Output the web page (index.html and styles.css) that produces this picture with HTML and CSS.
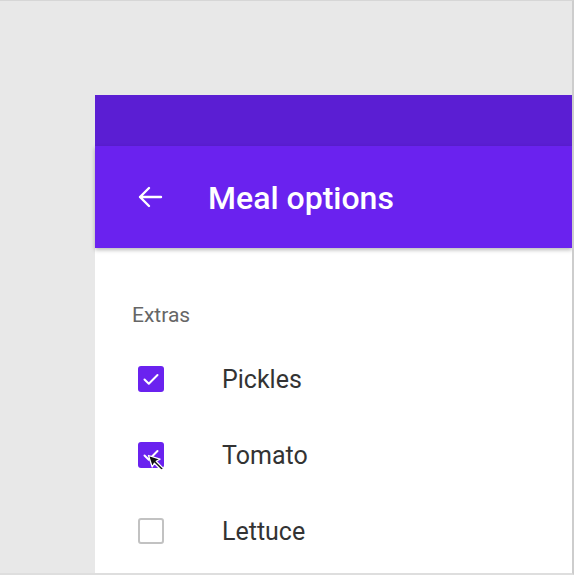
FILE: index.html
```html
<!DOCTYPE html>
<html>
<head>
<meta charset="utf-8">
<link rel="stylesheet" href="styles.css">
</head>
<body>
<div class="frame">
  <div class="card">
    <div class="status"></div>
    <div class="toolbar">
      <svg class="back" width="28" height="28" viewBox="0 0 28 28">
        <path d="M25 14H4M13 5L4 14L13 23" fill="none" stroke="#fff" stroke-width="2.4" stroke-linecap="round" stroke-linejoin="round"/>
      </svg>
      <h1 class="title">Meal options</h1>
    </div>
    <div class="content">
      <div class="section">Extras</div>
      <div class="row">
        <span class="box checked">
          <svg width="26" height="26" viewBox="0 0 26 26"><path d="M6.5 13.5L10.8 17.8L19.5 9" fill="none" stroke="#fff" stroke-width="2" stroke-linecap="round" stroke-linejoin="round"/></svg>
        </span>
        <span class="label">Pickles</span>
      </div>
      <div class="row">
        <span class="box checked">
          <svg width="26" height="26" viewBox="0 0 26 26"><path d="M6.5 13.5L10.8 17.8L19.5 9" fill="none" stroke="#fff" stroke-width="2" stroke-linecap="round" stroke-linejoin="round"/></svg>
          <svg class="cursor" width="19" height="19" viewBox="0 0 19 19"><path d="M1.5 1.5L13 5.2L9.2 7.3L16.5 14.6L14.6 16.5L7.3 9.2L5.2 13Z" fill="#111" stroke="#fff" stroke-width="1.3" stroke-linejoin="round"/></svg>
        </span>
        <span class="label">Tomato</span>
      </div>
      <div class="row">
        <span class="box"></span>
        <span class="label">Lettuce</span>
      </div>
    </div>
  </div>
</div>
</body>
</html>
```
FILE: styles.css
```css
html, body {
  margin: 0;
  padding: 0;
  background: #ffffff;
}
.frame {
  box-sizing: border-box;
  width: 574px;
  height: 575px;
  background: #e8e8e8;
  border-top: 1px solid #d6d6d6;
  border-right: 2px solid #cdcdcd;
  border-bottom: 2px solid #dedede;
  padding: 94px 0 0 95px;
  display: flex;
  flex-direction: column;
  overflow: hidden;
}
.card {
  flex: 1;
  background: #ffffff;
  display: flex;
  flex-direction: column;
  font-family: Roboto, "Liberation Sans", sans-serif;
}
.status {
  height: 51px;
  background: #5b1ed3;
}
.toolbar {
  height: 102px;
  background: #6a22ef;
  display: flex;
  align-items: center;
  padding-left: 41px;
  box-shadow: 0 2px 4px rgba(0,0,0,0.28);
  position: relative;
  z-index: 1;
}
.back {
  display: block;
}
.title {
  margin: 0 0 0 44px;
  color: #ffffff;
  font-size: 32px;
  font-weight: 500;
  line-height: 1;
  padding-top: 1px;
}
.content {
  padding: 55px 0 0 37px;
}
.section {
  color: #666666;
  font-size: 21px;
  line-height: 24px;
  margin-bottom: 26px;
}
.row {
  display: flex;
  align-items: center;
  height: 76px;
  margin-top: -12px;
  margin-bottom: 12px;
}
.box {
  position: relative;
  box-sizing: border-box;
  width: 26px;
  height: 26px;
  margin-left: 6px;
  border: 2px solid #c2c2c2;
  border-radius: 3px;
  flex: none;
}
.box.checked {
  border: none;
  background: #6a22ef;
}
.box svg {
  display: block;
}
.box .cursor {
  position: absolute;
  left: 9px;
  top: 12px;
}
.label {
  margin-left: 58px;
  font-size: 25px;
  color: #333333;
  line-height: 1;
}
```
